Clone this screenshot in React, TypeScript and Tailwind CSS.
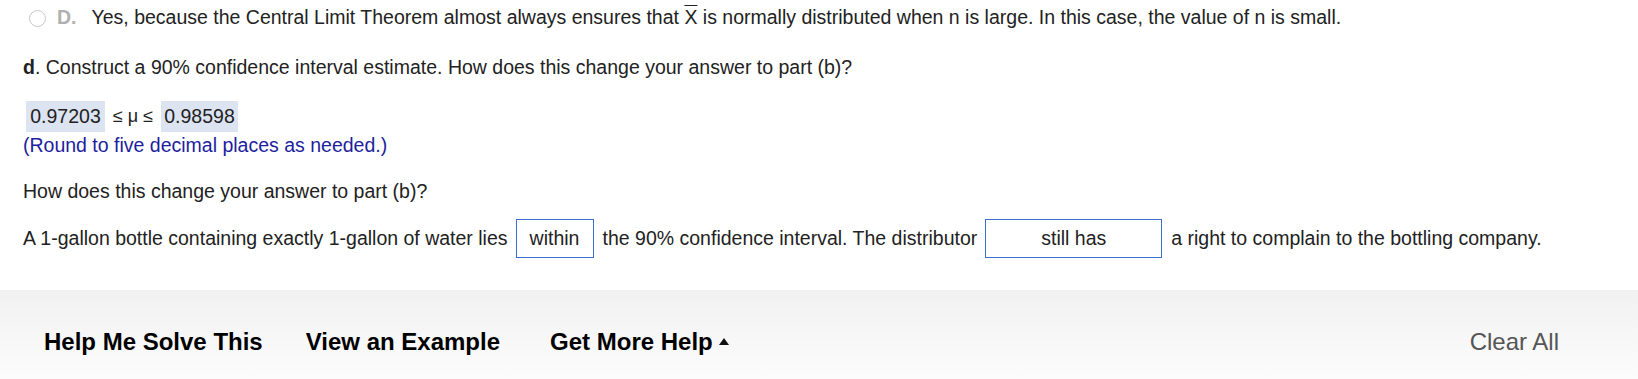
export default function App() {
    return (
        <div className="w-[1638px] h-[379px] bg-white overflow-hidden text-[19.5px] text-[#222] font-['Liberation_Sans',Arial,sans-serif]">
            <div className="pl-[23px]">
                {/* choice D */}
                <div className="h-[36px] flex items-center">
                    <span className="ml-[6px] w-[17px] h-[17px] rounded-full border-[1.5px] border-[#c8c8c8]" />
                    <span className="ml-[11px] font-bold text-[#b0b0b0]">D.</span>
                    <span className="ml-[15px]">
                        Yes, because the Central Limit Theorem almost always ensures that{" "}
                        <span className="overline">X</span> is normally distributed when n is large. In this case, the
                        value of n is small.
                    </span>
                </div>

                <div className="mt-[18px] leading-[26px]">
                    <span className="font-bold">d</span>. Construct a 90% confidence interval estimate. How does this
                    change your answer to part (b)?
                </div>

                <div className="mt-[21px] h-[31px] flex items-center">
                    <span className="ml-[3px] h-[31px] w-[79px] flex items-center justify-center bg-[#dce4f1]">0.97203</span>
                    <span className="w-[56px] flex justify-center text-[18px]">≤ μ ≤</span>
                    <span className="h-[31px] w-[77px] flex items-center justify-center bg-[#dce4f1]">0.98598</span>
                </div>

                <div className="mt-[2px] leading-[22px] text-[#1e1e9e]">(Round to five decimal places as needed.)</div>

                <div className="mt-[24px] leading-[22px]">How does this change your answer to part (b)?</div>

                <div className="mt-[17px] h-[39px] flex items-center">
                    <span>A 1-gallon bottle containing exactly 1-gallon of water lies</span>
                    <span className="ml-[8px] h-[39px] w-[78px] flex items-center justify-center border border-[#3b6fcf]">
                        within
                    </span>
                    <span className="ml-[9px]">the 90% confidence interval. The distributor</span>
                    <span className="ml-[8px] h-[39px] w-[177px] flex items-center justify-center border border-[#3b6fcf]">
                        still has
                    </span>
                    <span className="ml-[9px]">a right to complain to the bottling company.</span>
                </div>
            </div>

            {/* footer */}
            <div className="mt-[32px] h-[89px] pt-[14px] bg-gradient-to-b from-[#f1f1f1] to-[#fcfcfc] flex items-center">
                <div className="flex items-center text-[24px] font-bold text-black">
                    <span className="ml-[44px]">Help Me Solve This</span>
                    <span className="ml-[43px]">View an Example</span>
                    <span className="ml-[50px] flex items-center">
                        Get More Help
                        <svg className="ml-[6px]" width="10" height="7" viewBox="0 0 10 7">
                            <path d="M5 0 L10 7 L0 7 Z" fill="#111" />
                        </svg>
                    </span>
                </div>
                <span className="ml-auto mr-[79px] text-[24px] text-[#555]">Clear All</span>
            </div>
        </div>
    );
}
